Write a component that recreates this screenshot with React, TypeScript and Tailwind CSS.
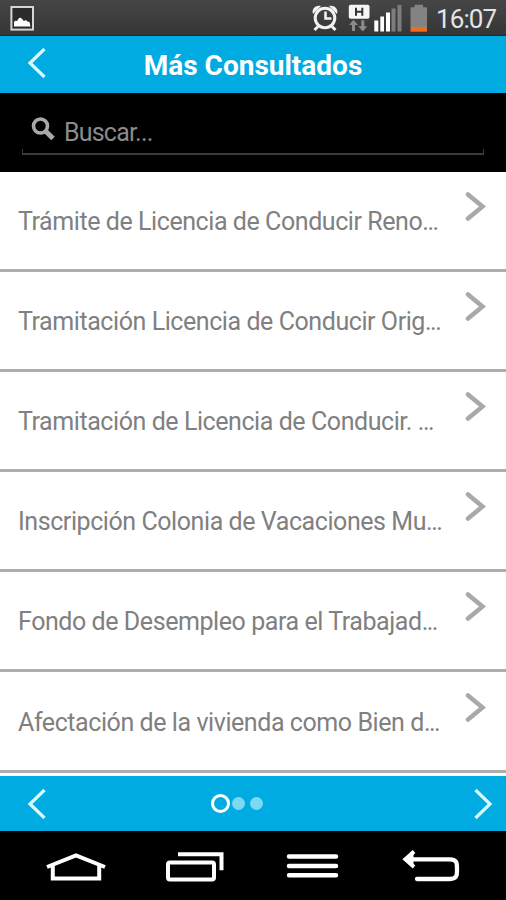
import { useState } from "react";
import clsx from "clsx";

const ITEMS = [
    { id: 1, title: "Trámite de Licencia de Conducir Reno" },
    { id: 2, title: "Tramitación Licencia de Conducir Orig" },
    { id: 3, title: "Tramitación de Licencia de Conducir. " },
    { id: 4, title: "Inscripción Colonia de Vacaciones Mu" },
    { id: 5, title: "Fondo de Desempleo para el Trabajad" },
    { id: 6, title: "Afectación de la vivienda como Bien d" },
];

const StatusBar = () => (
    <div className="flex h-9 shrink-0 justify-between bg-linear-to-b from-[#464646] to-[#363636] border-b border-[#202a2e]">
        <svg className="ml-[10px] mt-[5px]" width="25" height="26" viewBox="0 0 25 26">
            <rect x="1.4" y="2" width="21.6" height="22.6" fill="#2b2b2b" stroke="#d6d6d6" strokeWidth="2" />
            <path d="M4 21.500v-4.500q1-2 3-1l2-3q2-1 3 1l2 2q2-1.500 3.500 0.500l2 .5 1 4.500z" fill="#fff" />
        </svg>
        <div className="flex">
            <svg width="126" height="35" viewBox="310 0 126 35">
                {/* alarm clock */}
                <circle cx="325" cy="18" r="9.8" fill="none" stroke="#f2f2f2" strokeWidth="3" />
                <path d="M325.5 11.500v7h6" fill="none" stroke="#f2f2f2" strokeWidth="2.600" />
                <path d="M313 14c-2-6 4-9.500 8-8zM337 14c2-6-4-9.500-8-8z" fill="#f2f2f2" />
                <path d="M318 26.500l-3.500 3.500M332 26.500l3.500 3.500" stroke="#f2f2f2" strokeWidth="3" />
                {/* mobile data */}
                <rect x="348.800" y="4.700" width="20.700" height="14" rx="1.800" fill="#f6f6f6" />
                <path d="M356 7.700v8M362.300 7.700v8M356 11.800h6.300" stroke="#333" strokeWidth="2" fill="none" />
                <path d="M353.500 19.800l4.500 5.200h-3v6h-3v-6h-3zM362.800 31.500l-4.500-5.200h3v-6h3v6h3z" fill="#8b8b8b" />
                {/* signal */}
                <path d="M374.300 20.500h4v11h-4zM380.300 16.500h3.700v15h-3.700zM386 12.500h4v19h-4z" fill="#fff" />
                <path d="M391.500 8.500h4v23h-4zM397.500 5h4v26.500h-4z" fill="#7d7d7d" />
                {/* battery */}
                <path d="M414.500 4.800h8.500v2.500h4v20h-16.500v-20h4z" fill="#838383" />
                <path d="M410.500 27h16.500v4.700h-16.500z" fill="#f26a1b" />
            </svg>
            <span className="w-[70px] pt-[1px] text-[26px] leading-[36px] tracking-[-0.9px] text-[#e4e4e4]">16:07</span>
        </div>
    </div>
);

const Arrow = ({ right }: { right?: boolean }) => (
    <svg width="20" height="34" viewBox="0 0 20 34" className={clsx(right && "rotate-180")}>
        <path d="M17.500 3L3 17 17.500 31" fill="none" stroke="#d9f8ff" strokeWidth="3.200" />
    </svg>
);

const NavBar = () => (
    <div className="h-[69px] shrink-0 bg-black">
        <svg width="506" height="69" viewBox="0 831 506 69" fill="none" stroke="#fff" strokeWidth="4">
            <path d="M47 867l29-11.500 29 11.500M52.800 866v12.500h46.400V866" />
            <rect x="168" y="862.500" width="46" height="17" rx="2" />
            <path d="M178 854.300h43.500v16" />
            <path d="M289 856.500h47M289 866h47M289 875.300h47" strokeWidth="4.500" strokeLinecap="round" />
            <path d="M407 859.300h43c7.500 0 7 5 7 10s.5 9.700-7 9.700h-33" strokeWidth="4.300" strokeLinecap="round" />
            <path d="M414 851.500l-8.500 7.800 8.500 7.700" />
            <path d="M402.500 859.300l11-8.500v17z" fill="#fff" stroke="none" />
        </svg>
    </div>
);

const App = () => {
    const [page, setPage] = useState(0);
    const [search, setSearch] = useState("");

    return (
        <div className="flex h-[900px] w-[506px] flex-col overflow-hidden bg-white font-[Roboto,sans-serif]">
            <StatusBar />
            <header className="flex h-[57px] shrink-0 items-center bg-[#00abe1]">
                <button type="button" className="ml-[27px] w-5 pb-[3px]">
                    <Arrow />
                </button>
                <h1 className="w-[412px] pt-[3px] text-center text-[28px] font-bold text-white">Más Consultados</h1>
            </header>
            <div className="h-[79px] shrink-0 bg-black px-[22px] pt-[18px]">
                <div className="flex h-[38px] items-center">
                    <svg className="ml-[9px] mb-[3px]" width="25" height="26" viewBox="0 0 25 26" fill="none" stroke="#a9a9a9">
                        <circle cx="9.500" cy="10" r="7" strokeWidth="3.600" />
                        <path d="M14.500 15l7.500 7.500" strokeWidth="5" />
                    </svg>
                    <input
                        className="ml-[8px] mt-[5px] w-[380px] bg-transparent text-[25px] tracking-[-0.8px] text-[#8b8b8b] outline-none placeholder:text-[#8b8b8b]"
                        placeholder="Buscar..."
                        value={search}
                        onChange={(e) => setSearch(e.target.value)}
                    />
                </div>
                <div className="h-[6px] border-x border-b-2 border-[#3b3b3b]" />
            </div>
            <ul className="h-[604px] shrink-0">
                {ITEMS.map((item) => (
                    <li
                        key={item.id}
                        className="flex h-[100px] border-b-[3px] border-[#adadad] pl-[18px] last:h-[101px] last:pt-[1px]"
                    >
                        <span className="w-[447px] whitespace-pre pt-[31px] text-[25px] leading-[38px] tracking-[-0.43px] text-[#808080]">
                            {item.title}
                            <span className="tracking-[-1.5px]">...</span>
                        </span>
                        <svg className="mt-[19px]" width="22" height="32" viewBox="0 0 22 32">
                            <path d="M3 3.500L17.500 15.500 3 27.500" fill="none" stroke="#a9a9a9" strokeWidth="4.500" strokeLinecap="round" />
                        </svg>
                    </li>
                ))}
            </ul>
            <footer className="flex h-[55px] shrink-0 items-center bg-[#00abe1] pl-[27px]">
                <button type="button" onClick={() => setPage(Math.max(page - 1, 0))}>
                    <Arrow />
                </button>
                <div className="ml-[164px] flex w-[262px] items-center gap-[2px]">
                    {[0, 1, 2].map((i) => (
                        <span
                            key={i}
                            className={clsx(
                                "rounded-full",
                                i === page ? "size-[19px] border-[3px] border-white" : "mr-[3px] size-[13px] bg-[#7dd9f2]"
                            )}
                        />
                    ))}
                </div>
                <button type="button" onClick={() => setPage(Math.min(page + 1, 2))}>
                    <Arrow right />
                </button>
            </footer>
            <NavBar />
        </div>
    );
};

export default App;
